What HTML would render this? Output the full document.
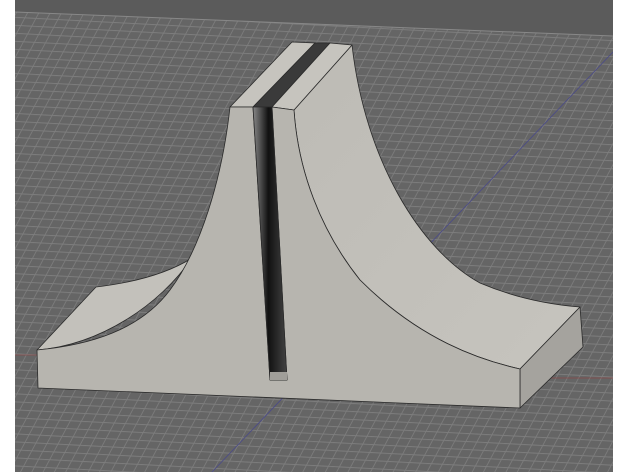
<!DOCTYPE html>
<html><head><meta charset="utf-8"><style>html,body{margin:0;padding:0;background:#fff;width:628px;height:472px;overflow:hidden}</style></head>
<body>
<svg width="628" height="472" viewBox="0 0 628 472" xmlns="http://www.w3.org/2000/svg">
<defs>
<pattern id="g" width="11" height="8" patternUnits="userSpaceOnUse" patternTransform="rotate(3) skewX(-25)">
<rect width="11" height="8" fill="#656565"/>
<path d="M0 0.5H11M0.5 0V8" stroke="#7d7d7d" stroke-width="0.9"/>
</pattern>
<linearGradient id="sl" x1="0" x2="1" y1="0" y2="0">
<stop offset="0" stop-color="#888"/><stop offset="0.45" stop-color="#111"/><stop offset="1" stop-color="#444"/>
</linearGradient>
<linearGradient id="rs" x1="0" x2="1" y1="0" y2="1">
<stop offset="0" stop-color="#bdbbb5"/><stop offset="1" stop-color="#c6c4be"/>
</linearGradient>
</defs>
<rect width="628" height="472" fill="url(#g)"/>
<polygon points="15,0 613,0 613,36 15,12" fill="#5b5b5b"/>
<line x1="15" y1="12" x2="613" y2="36" stroke="#888" stroke-width="1"/>
<line x1="613" y1="52" x2="212" y2="472" stroke="#4a4a8a" stroke-width="0.8"/>
<line x1="480" y1="378" x2="613" y2="378" stroke="#8a4a4a" stroke-width="0.8"/>
<line x1="15" y1="355" x2="37" y2="355" stroke="#8a4a4a" stroke-width="0.8"/>
<g stroke="#2a2a2a" stroke-width="0.8" stroke-linejoin="round">
<path d="M37,350 L96,287 C130,283 165,275 192,258 C160,305 100,345 37,350 Z" fill="#c3c1bb"/>
<path d="M352,45 C365,160 420,250 480,283 C520,300 555,305 580,307 L520,369 C480,360 420,340 360,280 C320,230 298,170 294,110 Z" fill="url(#rs)"/>
<polygon points="230,107 253,107 315,43 292,42" fill="#c6c4be"/>
<polygon points="253,107 272,107 330,43 315,43" fill="#3a3a3a"/>
<polygon points="272,107 294,110 352,45 330,43" fill="#c6c4be"/>
<polygon points="580,307 583,347 520,408 520,369" fill="#a5a39e"/>
<path d="M37,350 C90,345 140,330 170,290 C200,250 222,180 230,107 L253,107 L270,380 L287,380 L272,107 L294,110 C298,170 320,230 360,280 C420,340 480,360 520,369 L520,408 L38,388 Z" fill="#b7b5af"/>
<polygon points="253,107 272,107 287,380 270,380" fill="url(#sl)"/>
<polygon points="270,372 287,372 287,380 270,380" fill="#a09e99" stroke="none"/>
</g>
<rect x="0" y="0" width="15" height="472" fill="#fff"/>
<rect x="613" y="0" width="15" height="472" fill="#fff"/>
</svg>
</body></html>
